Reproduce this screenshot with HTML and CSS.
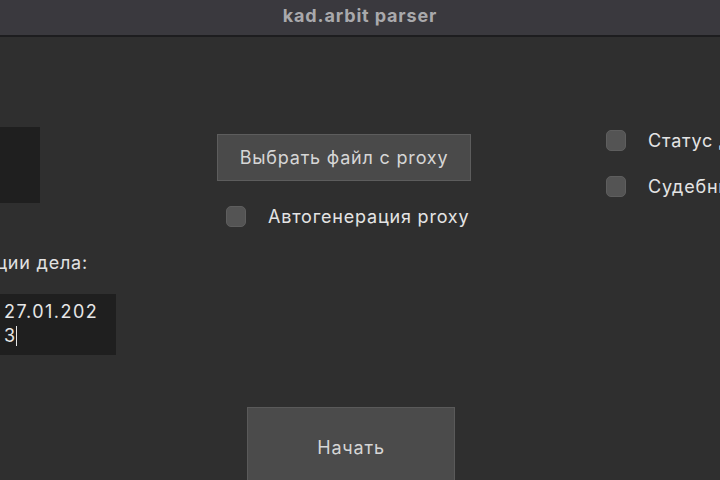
FILE: index.html
```html
<!DOCTYPE html>
<html lang="ru">
<head>
<meta charset="utf-8">
<title>kad.arbit parser</title>
<link rel="stylesheet" href="styles.css">
</head>
<body>
<div class="window">
  <header class="titlebar">kad.arbit parser</header>
  <main class="content">
    <div class="cols">
      <section class="col-left">
        <div class="dark-box"></div>
        <div class="label-row"><span class="label">Дата регистрации дела:</span></div>
        <div class="date-field">27.01.202<br>3<span class="caret"></span></div>
      </section>
      <section class="col-mid">
        <button class="btn file-btn" type="button">Выбрать файл с proxy</button>
        <label class="check-row"><span class="box"></span><span class="check-label">Автогенерация proxy</span></label>
      </section>
      <section class="col-right">
        <label class="check-row"><span class="box"></span><span class="check-label">Статус дела</span></label>
        <label class="check-row"><span class="box"></span><span class="check-label">Судебные акты</span></label>
      </section>
    </div>
    <button class="btn start-btn" type="button">Начать</button>
  </main>
</div>
</body>
</html>
```

FILE: styles.css
```css
html, body {
  margin: 0;
  padding: 0;
  background: #2f2f2f;
  overflow: hidden;
}
body {
  width: 720px;
  height: 480px;
  font-family: Inter, "Liberation Sans", Arial, sans-serif;
  color: #e2e2e2;
}
.window {
  width: 720px;
  height: 480px;
  overflow: hidden;
}
.titlebar {
  height: 37px;
  box-sizing: border-box;
  background: #3a393e;
  border-bottom: 2px solid #1d1d1f;
  display: flex;
  align-items: center;
  justify-content: center;
  padding-bottom: 4px;
  font-weight: 700;
  font-size: 18px;
  letter-spacing: 0.85px;
  color: #a9a9ac;
}
.content {
  display: flex;
  flex-direction: column;
}
.cols {
  display: flex;
  align-items: flex-start;
}
.col-left {
  width: 116px;
  flex: none;
  padding-top: 90px;
  display: flex;
  flex-direction: column;
}
.dark-box {
  width: 40px;
  height: 76px;
  background: #1f1f1f;
}
.label-row {
  display: flex;
  justify-content: flex-end;
  padding-right: 28px;
  margin-top: 50px;
  height: 20px;
  line-height: 20px;
  white-space: nowrap;
  font-size: 18px;
  letter-spacing: 0.8px;
}
.label {
  flex: none;
}
.date-field {
  margin-top: 21px;
  width: 116px;
  height: 61px;
  box-sizing: border-box;
  background: #1f1f1f;
  padding: 6px 4px;
  font-size: 18px;
  line-height: 24px;
  color: #e6e6e6;
  letter-spacing: 1.5px;
}
.caret {
  display: inline-block;
  width: 1px;
  height: 20px;
  background: #e6e6e6;
  vertical-align: -4px;
  margin-left: -1px;
}
.col-mid {
  margin-left: 101px;
  width: 254px;
  flex: none;
  padding-top: 97px;
  display: flex;
  flex-direction: column;
}
.btn {
  font-family: Inter, "Liberation Sans", Arial, sans-serif;
  background: #4a4a4a;
  border: 1px solid #5d5d5d;
  color: #d6d6d6;
  font-size: 18px;
  letter-spacing: 0.8px;
  padding: 0;
  margin: 0;
}
.file-btn {
  width: 254px;
  height: 47px;
}
.check-row {
  display: flex;
  align-items: center;
  white-space: nowrap;
  font-size: 18px;
  letter-spacing: 0.8px;
  color: #e4e4e4;
}
.col-mid .check-row {
  margin-top: 25px;
  margin-left: 9px;
}
.box {
  width: 20px;
  height: 21px;
  box-sizing: border-box;
  border-radius: 5px;
  background: #545454;
  border: 1px solid #5e5e5e;
  flex: none;
}
.check-label {
  margin-left: 22px;
}
.col-right {
  margin-left: 135px;
  flex: none;
  padding-top: 93px;
  display: flex;
  flex-direction: column;
  gap: 25px;
}
.start-btn {
  margin-top: 52px;
  margin-left: 247px;
  width: 208px;
  height: 80px;
  background: #4b4b4b;
  border-color: #5a5a5a;
  flex: none;
}
```
